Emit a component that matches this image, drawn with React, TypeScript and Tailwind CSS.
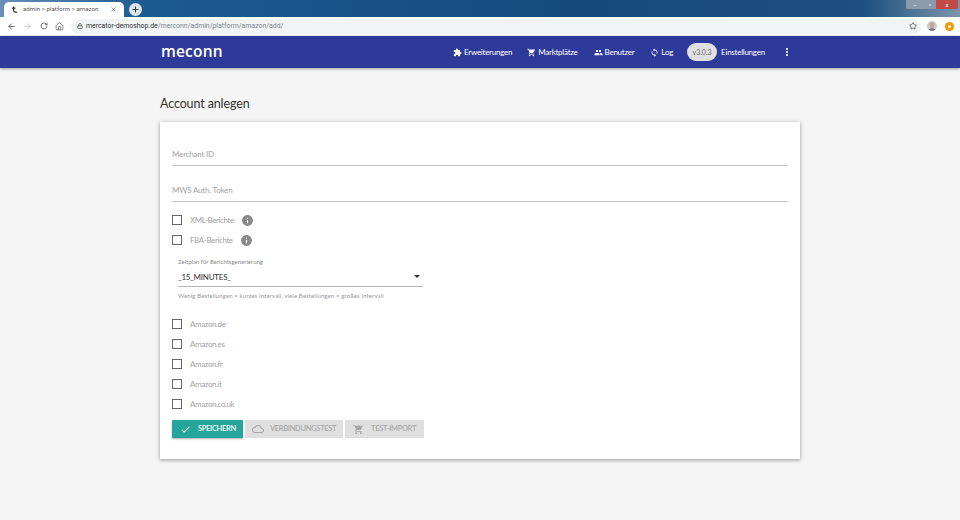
import { RotateCw, ArrowLeft, ArrowRight, Home, Lock, Star, X, Plus } from "lucide-react";
import { MdCheck, MdCloudQueue, MdExtension, MdInfo, MdLoop, MdMoreVert, MdPeople, MdShoppingCart } from "react-icons/md";

function Box({ label, info }: { label: string; info?: boolean }) {
  return (
    <div className="flex h-5 items-center">
      <span className="mr-[8px] box-border size-[10px] border-[1.5px] border-[#666]" />
      <span className="text-[8px] tracking-[-0.4px] text-[#a3a3a3]">{label}</span>
      {info && <MdInfo size={13} className="ml-[7px] text-[#8a8a8a]" />}
    </div>
  );
}

function Field({ label }: { label: string }) {
  return (
    <div className="flex h-[36px] items-end border-b border-[#c4c4c4] pb-[5px] text-[8px] leading-[11px] tracking-[-0.2px] text-[#a3a3a3]">{label}</div>
  );
}

function Nav({ icon, label }: { icon: React.ReactNode; label: string }) {
  return (
    <span className="flex items-center gap-[2px] text-[8px] tracking-[-0.25px] text-white">
      {icon}
      {label}
    </span>
  );
}

export default function App() {
  return (
    <div className="flex h-[520px] w-[960px] flex-col overflow-hidden bg-[#f5f5f5] font-['Lato',sans-serif]">
      <div className="relative flex h-[17px] shrink-0 items-end bg-[linear-gradient(90deg,#6a8fb8_0%,#1d5a92_15%,#164a7c_60%,#1d4f80_90%,#7d95ab_100%)]">
        <div className="ml-[4px] flex h-[15px] w-[120px] items-center rounded-t-[5px] bg-white px-[7px] font-['Roboto',sans-serif] text-[6.2px] text-[#5a5a5a]">
          <svg viewBox="0 0 8 8" className="mr-[5px] size-[7px] text-[#333]" fill="none" stroke="currentColor" strokeWidth="1.4">
            <path d="M3 0.5 V5 Q3 7 5 7 H7 M1 2.5 H5" />
          </svg>
          <span>admin &gt; platform &gt; amazon</span>
          <X size={7} className="ml-auto text-[#444]" strokeWidth={2} />
        </div>
        <div className="mb-[1px] ml-[5px] flex h-[13px] w-[13px] items-center justify-center rounded-full bg-[#dfe5ea]">
          <Plus size={9} className="text-[#333]" strokeWidth={2.5} />
        </div>
        <div className="absolute right-[2px] top-0 flex h-[9px] w-[52px] items-center overflow-hidden rounded-b-[2px] bg-[#8a9cab]">
          <span className="flex h-full w-[18px] items-center justify-center text-[6px] leading-none text-white">–</span>
          <span className="flex h-full w-[12px] items-center justify-center text-[6px] leading-none text-white">▫</span>
          <span className="flex h-full flex-1 items-center justify-center bg-[#c04a45] text-[6px] leading-none text-white">x</span>
        </div>
      </div>
      <div className="flex h-[18px] shrink-0 items-center bg-white pl-[7px] text-[#5f6368]">
        <ArrowLeft size={9} strokeWidth={2.5} />
        <ArrowRight size={9} strokeWidth={2} className="ml-[7px] text-[#b8bbbe]" />
        <RotateCw size={8} strokeWidth={2.5} className="ml-[8px]" />
        <Home size={9} strokeWidth={2} className="ml-[7px]" />
        <div className="ml-[7px] flex h-[15px] w-[850px] shrink-0 items-center rounded-full bg-[#f1f3f4] pl-[6px] font-['Roboto',sans-serif] text-[6.9px]">
          <Lock size={6} strokeWidth={3} className="mr-[3px] text-[#555]" />
          <span className="text-[#333]">mercator-demoshop.de</span>
          <span className="text-[#80868b]">/merconn/admin/platform/amazon/add/</span>
          <Star size={8} strokeWidth={2} className="ml-auto mr-[4px] text-[#444]" />
        </div>
        <svg viewBox="0 0 10 10" className="ml-[6px] size-[10px] shrink-0">
          <circle cx="5" cy="5" r="5" fill="#c9ced2" />
          <ellipse cx="5" cy="4.2" rx="2.4" ry="3" fill="#c9a48c" />
          <path d="M1.5 8.6 Q5 5.8 8.5 8.6 Q5 11 1.5 8.6Z" fill="#6a6f78" />
        </svg>
        <span className="ml-[8px] flex h-[9px] w-[9px] shrink-0 items-center justify-center rounded-full bg-[#f29900]">
          <span className="h-[3px] w-[3px] rounded-full bg-white" />
        </span>
      </div>
      <header className="mt-[1px] flex h-[32px] shrink-0 items-center bg-[#2d3a9a] pl-[161px] shadow-[0_1px_3px_rgba(0,0,0,0.35)]">
        <span className="w-[292px] font-['Open_Sans',sans-serif] text-[15.5px] font-semibold leading-none tracking-[0.2px] text-white">meconn</span>
        <nav className="flex items-center">
          <Nav icon={<MdExtension size={9} />} label="Erweiterungen" />
          <span className="ml-[15px]"><Nav icon={<MdShoppingCart size={9} />} label="Marktplätze" /></span>
          <span className="ml-[16px]"><Nav icon={<MdPeople size={9} />} label="Benutzer" /></span>
          <span className="ml-[16px]"><Nav icon={<MdLoop size={9} />} label="Log" /></span>
          <span className="ml-[14px] flex h-[18px] w-[30px] items-center justify-center rounded-full bg-[#e0e0e0] text-[7px] text-[#666]">v3.0.3</span>
          <span className="ml-[4px] text-[8px] tracking-[-0.25px] text-white">Einstellungen</span>
          <MdMoreVert size={12} className="ml-[16px] text-white" />
        </nav>
      </header>
      <main className="flex flex-col px-[160px]">
        <h1 className="mt-[27px] text-[12.5px] font-normal leading-[18px] tracking-[-0.12px] text-[#333]">Account anlegen</h1>
        <section className="mt-[9px] flex h-[337px] flex-col bg-white px-[12px] pt-[8px] shadow-[0_1px_4px_rgba(0,0,0,0.4)]">
          <Field label="Merchant ID" />
          <Field label="MWS Auth. Token" />
          <div className="mt-[8px] flex flex-col">
            <Box label="XML-Berichte" info />
            <Box label="FBA-Berichte" info />
          </div>
          <div className="ml-[6px] mt-[7px] flex w-[245px] flex-col">
            <span className="text-[6px] leading-[10px] text-[#888]">Zeitplan für Berichtsgenerierung</span>
            <div className="flex h-[20px] items-center justify-between border-b border-[#b5b5b5] pr-[3px] text-[8px] tracking-[-0.25px] text-[#333]">
              <span>_15_MINUTES_</span>
              <span className="h-0 w-0 border-x-[3px] border-t-[3px] border-x-transparent border-t-[#333]" />
            </div>
            <span className="mt-[4px] text-[6px] leading-[10px] tracking-[0.12px] text-[#999]">Wenig Bestellungen = kurzes Intervall, viele Bestellungen = großes Intervall</span>
          </div>
          <div className="mt-[13px] flex flex-col">
            <Box label="Amazon.de" />
            <Box label="Amazon.es" />
            <Box label="Amazon.fr" />
            <Box label="Amazon.it" />
            <Box label="Amazon.co.uk" />
          </div>
          <div className="mt-[6px] flex gap-[2px] text-[7.5px] font-medium tracking-[-0.3px]">
            <button className="flex h-[18px] w-[71px] items-center gap-[7px] rounded-[1px] bg-[#26a69a] pl-[8px] text-white shadow-[0_1px_2px_rgba(0,0,0,0.35)]">
              <MdCheck size={11} />
              SPEICHERN
            </button>
            <button className="flex h-[18px] w-[98px] items-center gap-[6px] rounded-[1px] bg-[#dfdfdf] pl-[7px] text-[#a6a6a6]">
              <MdCloudQueue size={12} />
              VERBINDUNGSTEST
            </button>
            <button className="flex h-[18px] w-[79px] items-center gap-[7px] rounded-[1px] bg-[#dfdfdf] pl-[8px] text-[#a6a6a6]">
              <MdShoppingCart size={11} />
              TEST-IMPORT
            </button>
          </div>
        </section>
      </main>
    </div>
  );
}
